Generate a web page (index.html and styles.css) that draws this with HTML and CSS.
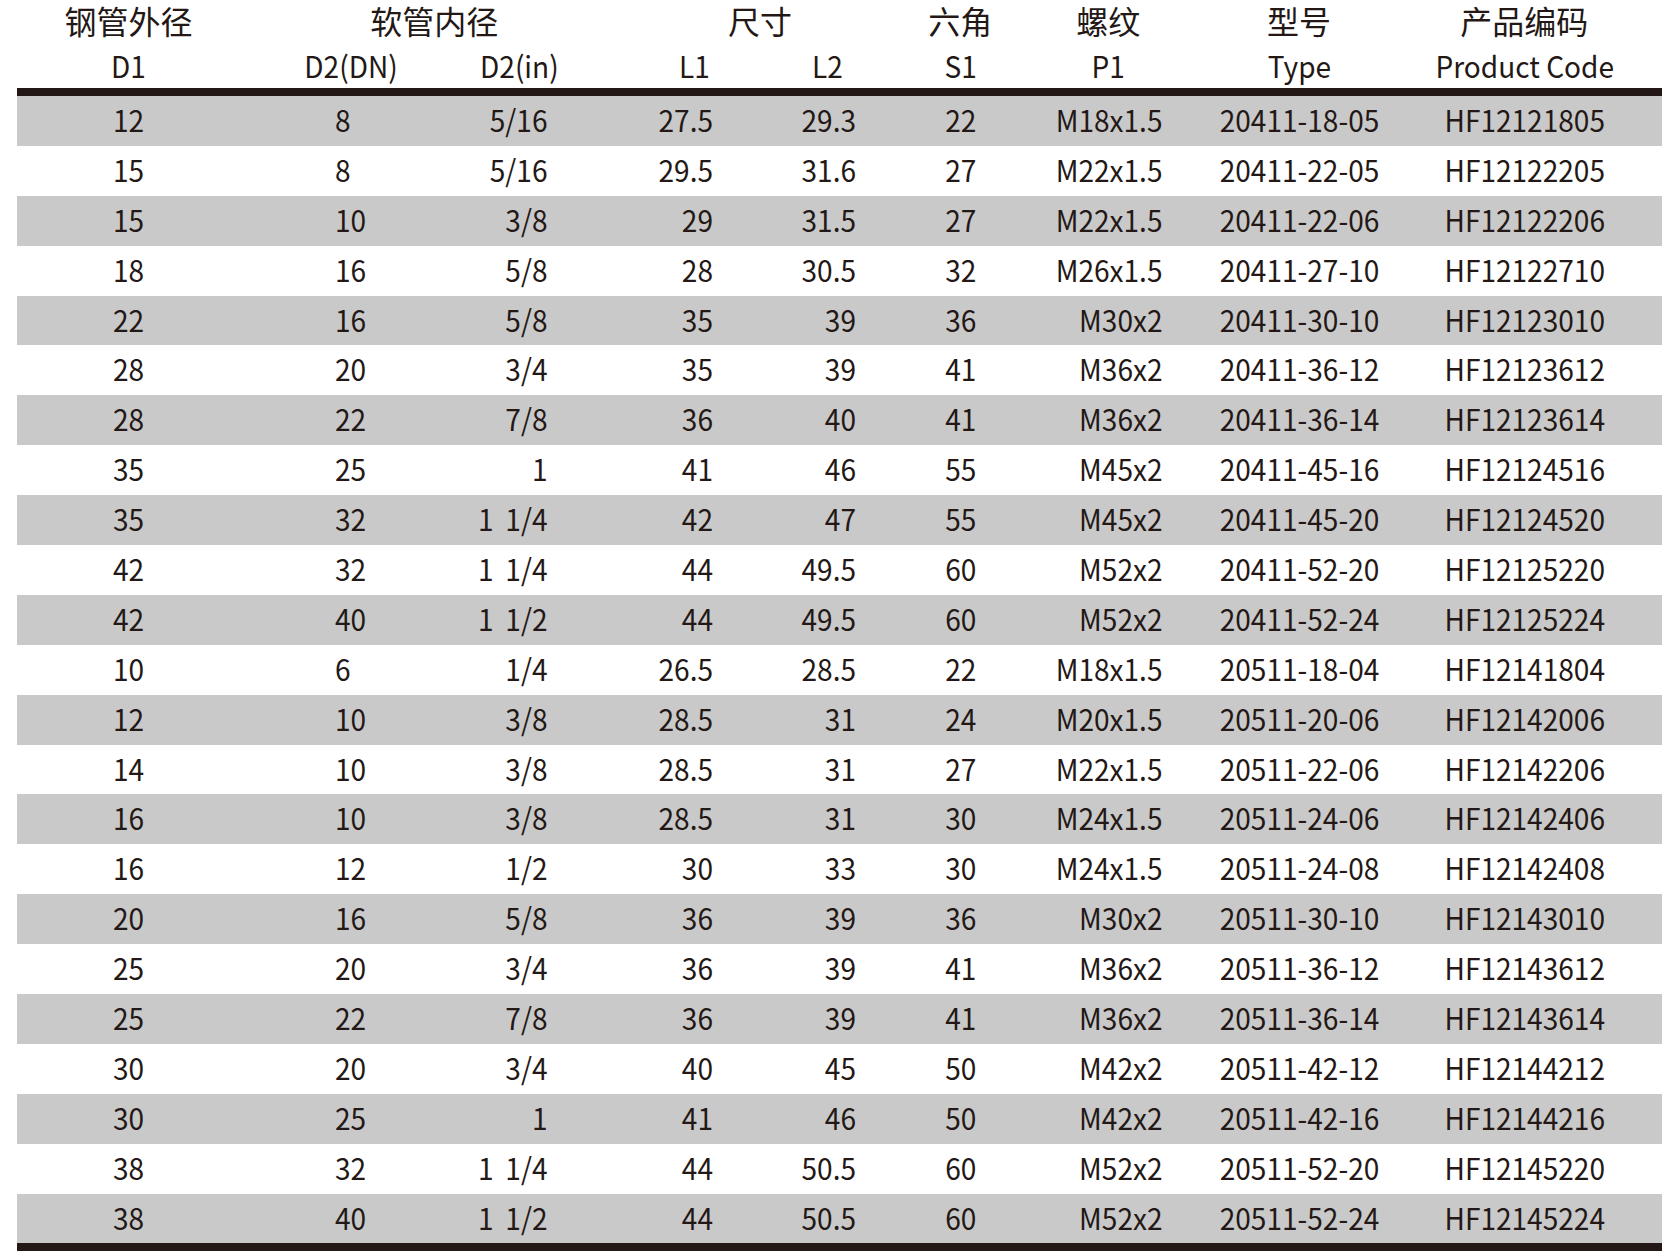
FILE: index.html
```html
<!DOCTYPE html>
<html lang="zh">
<head>
<meta charset="utf-8">
<title>规格表</title>
<link rel="stylesheet" href="styles.css">
</head>
<body>
<div class="sheet">
  <div class="head head-cn">
    <div class="c1">钢管外径</div>
    <div class="g23">软管内径</div>
    <div class="g45">尺寸</div>
    <div class="c6">六角</div>
    <div class="c7">螺纹</div>
    <div class="c8">型号</div>
    <div class="c9">产品编码</div>
  </div>
  <div class="head head-en">
    <div class="c1">D1</div>
    <div class="c2">D2(DN)</div>
    <div class="c3">D2(in)</div>
    <div class="c4">L1</div>
    <div class="c5">L2</div>
    <div class="c6">S1</div>
    <div class="c7">P1</div>
    <div class="c8">Type</div>
    <div class="c9">Product Code</div>
  </div>
  <div class="body">
    <div class="row"><div class="d1">12</div><div class="d2">8</div><div class="d3">5/16</div><div class="d4">27.5</div><div class="d5">29.3</div><div class="d6">22</div><div class="d7">M18x1.5</div><div class="d8">20411-18-05</div><div class="d9">HF12121805</div></div>
    <div class="row"><div class="d1">15</div><div class="d2">8</div><div class="d3">5/16</div><div class="d4">29.5</div><div class="d5">31.6</div><div class="d6">27</div><div class="d7">M22x1.5</div><div class="d8">20411-22-05</div><div class="d9">HF12122205</div></div>
    <div class="row"><div class="d1">15</div><div class="d2">10</div><div class="d3">3/8</div><div class="d4">29</div><div class="d5">31.5</div><div class="d6">27</div><div class="d7">M22x1.5</div><div class="d8">20411-22-06</div><div class="d9">HF12122206</div></div>
    <div class="row"><div class="d1">18</div><div class="d2">16</div><div class="d3">5/8</div><div class="d4">28</div><div class="d5">30.5</div><div class="d6">32</div><div class="d7">M26x1.5</div><div class="d8">20411-27-10</div><div class="d9">HF12122710</div></div>
    <div class="row"><div class="d1">22</div><div class="d2">16</div><div class="d3">5/8</div><div class="d4">35</div><div class="d5">39</div><div class="d6">36</div><div class="d7">M30x2</div><div class="d8">20411-30-10</div><div class="d9">HF12123010</div></div>
    <div class="row"><div class="d1">28</div><div class="d2">20</div><div class="d3">3/4</div><div class="d4">35</div><div class="d5">39</div><div class="d6">41</div><div class="d7">M36x2</div><div class="d8">20411-36-12</div><div class="d9">HF12123612</div></div>
    <div class="row"><div class="d1">28</div><div class="d2">22</div><div class="d3">7/8</div><div class="d4">36</div><div class="d5">40</div><div class="d6">41</div><div class="d7">M36x2</div><div class="d8">20411-36-14</div><div class="d9">HF12123614</div></div>
    <div class="row"><div class="d1">35</div><div class="d2">25</div><div class="d3">1</div><div class="d4">41</div><div class="d5">46</div><div class="d6">55</div><div class="d7">M45x2</div><div class="d8">20411-45-16</div><div class="d9">HF12124516</div></div>
    <div class="row"><div class="d1">35</div><div class="d2">32</div><div class="d3">1 1/4</div><div class="d4">42</div><div class="d5">47</div><div class="d6">55</div><div class="d7">M45x2</div><div class="d8">20411-45-20</div><div class="d9">HF12124520</div></div>
    <div class="row"><div class="d1">42</div><div class="d2">32</div><div class="d3">1 1/4</div><div class="d4">44</div><div class="d5">49.5</div><div class="d6">60</div><div class="d7">M52x2</div><div class="d8">20411-52-20</div><div class="d9">HF12125220</div></div>
    <div class="row"><div class="d1">42</div><div class="d2">40</div><div class="d3">1 1/2</div><div class="d4">44</div><div class="d5">49.5</div><div class="d6">60</div><div class="d7">M52x2</div><div class="d8">20411-52-24</div><div class="d9">HF12125224</div></div>
    <div class="row"><div class="d1">10</div><div class="d2">6</div><div class="d3">1/4</div><div class="d4">26.5</div><div class="d5">28.5</div><div class="d6">22</div><div class="d7">M18x1.5</div><div class="d8">20511-18-04</div><div class="d9">HF12141804</div></div>
    <div class="row"><div class="d1">12</div><div class="d2">10</div><div class="d3">3/8</div><div class="d4">28.5</div><div class="d5">31</div><div class="d6">24</div><div class="d7">M20x1.5</div><div class="d8">20511-20-06</div><div class="d9">HF12142006</div></div>
    <div class="row"><div class="d1">14</div><div class="d2">10</div><div class="d3">3/8</div><div class="d4">28.5</div><div class="d5">31</div><div class="d6">27</div><div class="d7">M22x1.5</div><div class="d8">20511-22-06</div><div class="d9">HF12142206</div></div>
    <div class="row"><div class="d1">16</div><div class="d2">10</div><div class="d3">3/8</div><div class="d4">28.5</div><div class="d5">31</div><div class="d6">30</div><div class="d7">M24x1.5</div><div class="d8">20511-24-06</div><div class="d9">HF12142406</div></div>
    <div class="row"><div class="d1">16</div><div class="d2">12</div><div class="d3">1/2</div><div class="d4">30</div><div class="d5">33</div><div class="d6">30</div><div class="d7">M24x1.5</div><div class="d8">20511-24-08</div><div class="d9">HF12142408</div></div>
    <div class="row"><div class="d1">20</div><div class="d2">16</div><div class="d3">5/8</div><div class="d4">36</div><div class="d5">39</div><div class="d6">36</div><div class="d7">M30x2</div><div class="d8">20511-30-10</div><div class="d9">HF12143010</div></div>
    <div class="row"><div class="d1">25</div><div class="d2">20</div><div class="d3">3/4</div><div class="d4">36</div><div class="d5">39</div><div class="d6">41</div><div class="d7">M36x2</div><div class="d8">20511-36-12</div><div class="d9">HF12143612</div></div>
    <div class="row"><div class="d1">25</div><div class="d2">22</div><div class="d3">7/8</div><div class="d4">36</div><div class="d5">39</div><div class="d6">41</div><div class="d7">M36x2</div><div class="d8">20511-36-14</div><div class="d9">HF12143614</div></div>
    <div class="row"><div class="d1">30</div><div class="d2">20</div><div class="d3">3/4</div><div class="d4">40</div><div class="d5">45</div><div class="d6">50</div><div class="d7">M42x2</div><div class="d8">20511-42-12</div><div class="d9">HF12144212</div></div>
    <div class="row"><div class="d1">30</div><div class="d2">25</div><div class="d3">1</div><div class="d4">41</div><div class="d5">46</div><div class="d6">50</div><div class="d7">M42x2</div><div class="d8">20511-42-16</div><div class="d9">HF12144216</div></div>
    <div class="row"><div class="d1">38</div><div class="d2">32</div><div class="d3">1 1/4</div><div class="d4">44</div><div class="d5">50.5</div><div class="d6">60</div><div class="d7">M52x2</div><div class="d8">20511-52-20</div><div class="d9">HF12145220</div></div>
    <div class="row"><div class="d1">38</div><div class="d2">40</div><div class="d3">1 1/2</div><div class="d4">44</div><div class="d5">50.5</div><div class="d6">60</div><div class="d7">M52x2</div><div class="d8">20511-52-24</div><div class="d9">HF12145224</div></div>
  </div>
</div>
</body>
</html>
```

FILE: styles.css
```css
html, body {
  margin: 0;
  padding: 0;
  background: #ffffff;
}

body {
  font-family: "Noto Sans CJK SC", "Noto Sans", sans-serif;
  color: #231815;
  font-size: 30px;
}

.sheet {
  margin-left: 17px;
  width: 1645px;
}

.head,
.row {
  display: grid;
  grid-template-columns: 223px 195px 171.5px 154px 133px 140.5px 169.5px 208px 250.5px;
  white-space: nowrap;
}

.head > div {
  text-align: center;
}

/* Chinese header line */
.head-cn {
  height: 44px;
  line-height: 40px;
  font-size: 32px;
}

.head-cn .c1 { grid-column: 1; }
.head-cn .g23 { grid-column: 2 / span 2; padding-left: 22px; }
.head-cn .g45 { grid-column: 4 / span 2; padding-left: 20px; }
.head-cn .c6 { grid-column: 6; padding-right: 7px; }
.head-cn .c7 { grid-column: 7; padding-right: 21px; }
.head-cn .c8 { grid-column: 8; padding-right: 17px; }
.head-cn .c9 { grid-column: 9; padding-right: 25px; }

/* Latin header line: narrow letterforms */
.head-en {
  height: 44px;
  line-height: 42px;
}

.head-en > div {
  transform: scaleX(0.935);
  transform-origin: 50% 50%;
}

.head-en .c2 { padding-left: 27px; transform-origin: calc(50% + 13.5px) 50%; }
.head-en .c3 { padding-right: 3px; }
.head-en .c4 { padding-left: 21px; transform-origin: calc(50% + 10.5px) 50%; }
.head-en .c6 { padding-right: 7px; transform-origin: calc(50% - 3.5px) 50%; }
.head-en .c7 { padding-right: 21px; transform-origin: calc(50% - 10.5px) 50%; }
.head-en .c8 { padding-right: 17px; transform-origin: calc(50% - 8.5px) 50%; }
.head-en .c9 { padding-right: 25px; transform-origin: calc(50% - 12.5px) 50%; }

.body {
  border-top: 8px solid #231815;
  border-bottom: 8px solid #231815;
}

.row {
  height: 49.9px;
  line-height: 46px;
}

.row:nth-child(odd) {
  background: #c9c9c9;
}

.row > div {
  transform: scaleX(0.935);
}

.d1 { text-align: center; transform-origin: 50% 50%; }
.d2 { text-align: left; padding-left: 95px; transform-origin: 95px 50%; }
.d3 { text-align: right; padding-right: 59px; word-spacing: 6px; transform-origin: calc(100% - 59px) 50%; }
.d4 { text-align: right; padding-right: 48px; transform-origin: calc(100% - 48px) 50%; }
.d5 { text-align: right; padding-right: 38px; transform-origin: calc(100% - 38px) 50%; }
.d6 { text-align: center; padding-right: 7px; transform-origin: calc(50% - 3.5px) 50%; }
.d7 { text-align: right; padding-right: 41px; transform-origin: calc(100% - 41px) 50%; }
.d8 { text-align: center; padding-right: 17px; transform-origin: calc(50% - 8.5px) 50%; }
.d9 { text-align: center; padding-right: 25px; transform-origin: calc(50% - 12.5px) 50%; }
```
